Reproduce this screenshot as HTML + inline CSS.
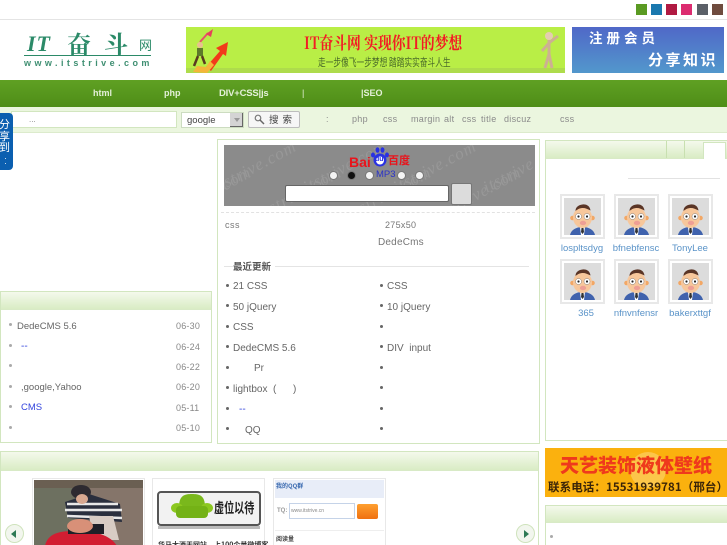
<!DOCTYPE html>
<html><head><meta charset="utf-8">
<style>
*{box-sizing:border-box}
html,body{margin:0;padding:0;overflow:hidden;width:727px;height:545px;background:#fff}
#w{width:727px;height:545px;overflow:hidden;background:#fff;position:relative;font-family:"Liberation Sans","Noto Sans CJK SC",sans-serif;font-size:10px;color:#666;filter:blur(.35px)}
.a{position:absolute}
.t{position:absolute;white-space:nowrap;line-height:12px}
.panel{position:absolute;border:1px solid #d2e6bf;background:#fff}
.hd{position:absolute;background:linear-gradient(#f4f9ec,#d9ecc4);border-bottom:1px solid #d8eac6}
.sw{position:absolute;top:4px;width:11px;height:11px}
.nav{position:absolute;top:87px;color:#e4f0d8;font-weight:bold;font-size:9px;line-height:12px;white-space:nowrap}
.sub{position:absolute;top:113px;color:#8a8a8a;font-size:9px;line-height:12px;white-space:nowrap;letter-spacing:.3px}
.dot{position:absolute;width:3px;height:3px;background:#aaa;border-radius:50%}
.dot2{position:absolute;width:3px;height:3px;background:#666;border-radius:50%}
.date{position:absolute;left:176px;color:#888;font-size:9px;line-height:12px;letter-spacing:.2px;margin-top:1px}
.l{position:absolute;font-size:10px;line-height:12px;white-space:nowrap;color:#666;margin-top:2px}
.av{position:absolute;width:45px;height:45px;border:2px solid #e8e8e8;background:#fff;padding:2px}
.av svg{display:block}
.nm{position:absolute;color:#5a93c8;font-size:9.5px;line-height:12px;white-space:nowrap;text-align:center;width:60px}
.radio{position:absolute;top:171px;width:9px;height:9px;border-radius:50%;background:#f4f4f4;border:1px solid #777}
.wm{position:absolute;white-space:nowrap;font:italic 17px/20px "Liberation Serif",serif;color:#989898;transform:rotate(-28deg);letter-spacing:1px}
</style></head><body>
<svg width="0" height="0" style="position:absolute"><defs>
<symbol id="face" viewBox="0 0 37 37">
<rect width="37" height="37" fill="#dcdcdc"/>
<path d="M6 37c1-5 6-8 12.500-8S30 32 31 37z" fill="#3f62ad"/>
<path d="M16 29h5l-1 8h-3z" fill="#fff"/><path d="M17.500 30h2l.5 4-1.500 2-1.500-2z" fill="#333"/>
<circle cx="8.500" cy="20" r="2.300" fill="#f2a765"/><circle cx="28.500" cy="20" r="2.300" fill="#f2a765"/>
<ellipse cx="18.500" cy="19.500" rx="9.500" ry="10.500" fill="#f7c79b"/>
<path d="M11.500 13c0-4 3-6 7-6.500 4.500-.5 7.500 2 8 6-3-1.500-5-2.500-7.500-2.500-3 0-5 1-7.500 3z" fill="#5a3526"/>
<circle cx="14.500" cy="18.500" r="3" fill="#fff" stroke="#666" stroke-width=".4"/><circle cx="23" cy="18.500" r="3" fill="#fff" stroke="#666" stroke-width=".4"/>
<circle cx="14.500" cy="18.500" r="1.100" fill="#222"/><circle cx="23" cy="18.500" r="1.100" fill="#222"/>
<ellipse cx="19" cy="25" rx="3.200" ry="2.200" fill="#ee9f95"/>
</symbol>
</defs></svg>
<div id="w">

<!-- swatches -->
<div class="sw" style="left:636px;background:#5a9a22"></div>
<div class="sw" style="left:651px;background:#1a78ae"></div>
<div class="sw" style="left:666px;background:#b01a42"></div>
<div class="sw" style="left:681px;background:#dc2c70"></div>
<div class="sw" style="left:697px;background:#5b6068"></div>
<div class="sw" style="left:712px;background:#6f4b3e"></div>
<div class="a" style="left:0;top:19px;width:727px;height:1px;background:#e4e4e4"></div>

<!-- logo -->
<div class="t" style="left:27px;top:33px;font:italic bold 22px/22px 'Liberation Serif',serif;color:#2b8a68;letter-spacing:1px">IT</div>
<div class="t" style="left:67px;top:28px;font:bold 24px/30px 'Noto Serif CJK SC',serif;color:#2b8a68">奋</div>
<div class="t" style="left:104px;top:28px;font:bold 24px/30px 'Noto Serif CJK SC',serif;color:#2b8a68">斗</div>
<div class="t" style="left:139px;top:36px;font:13px/18px 'Noto Sans CJK SC',sans-serif;color:#2b8a68">网</div>
<div class="a" style="left:24px;top:55px;width:127px;height:1px;background:#2b8a68"></div>
<div class="t" style="left:24px;top:57px;font:bold 9px/12px 'Liberation Sans',sans-serif;color:#3f8f72;letter-spacing:3.450px">www.itstrive.com</div>

<!-- banner -->
<div class="a" style="left:186px;top:27px;width:379px;height:46px;background:#b9ee46;overflow:hidden">
<div class="a" style="left:0;top:41px;width:379px;height:5px;background:#aedc4c"></div>
<svg class="a" style="left:0;top:0" width="50" height="46" viewBox="0 0 50 46">
<path d="M20 40 34 24 30 21 42 15 40 29 37 27 25 44z" fill="#f23a1a"/>
<path d="M7 45l4-6 9 1 4-6 4 4-7 8z" fill="#f4b63a"/>
<path d="M14 15 22 6" stroke="#e6506a" stroke-width="2"/><path d="M20 7l7-5-2 8z" fill="#e6405a"/>
<circle cx="14" cy="18" r="3" fill="#e8c090"/><rect x="11" y="21" width="6" height="8" fill="#5d7a2a"/>
<path d="M12 29 8 39M16 29l3 8" stroke="#5a3a20" stroke-width="2.500"/>
</svg>
<div class="t" style="left:118px;top:5px;font:bold 17px/20px 'Noto Serif CJK SC',serif;color:#f31c24;transform:scaleX(.81);transform-origin:0 0">IT奋斗网 实现你IT的梦想</div>
<div class="t" style="left:132px;top:28px;font:11px/14px 'Noto Sans CJK SC',sans-serif;color:#4a6a2a;transform:scaleX(.7);transform-origin:0 0">走一步像飞一步梦想 踏踏实实奋斗人生</div>
<svg class="a" style="left:350px;top:2px" width="28" height="42" viewBox="0 0 28 42"><circle cx="13" cy="7" r="4" fill="#e4cdb0"/><path d="M13 11v14M13 14 6 22M13 14 22 7M13 25 9 39M13 25 16 39" stroke="#cdb092" stroke-width="3" fill="none"/></svg>
</div>
<div class="a" style="left:572px;top:27px;width:152px;height:46px;background:linear-gradient(#5068c8,#5298cc)">
<div class="t" style="left:17px;top:1px;font:bold 13.500px/18px 'Noto Sans CJK SC',sans-serif;color:#fff;letter-spacing:4px">注册会员</div>
<div class="t" style="left:76px;top:23px;font:bold 15px/20px 'Noto Sans CJK SC',sans-serif;color:#fff;letter-spacing:2.500px">分享知识</div>
</div>

<!-- nav -->
<div class="a" style="left:0;top:80px;width:727px;height:27px;background:linear-gradient(#5fa023,#4e8d17)"></div>
<div class="nav" style="left:93px">html</div>
<div class="nav" style="left:164px">php</div>
<div class="nav" style="left:219px;font-size:9.500px;letter-spacing:-.2px;top:88px">DIV+CSS|js</div>
<div class="nav" style="left:302px;font-weight:normal">|</div>
<div class="nav" style="left:361px">|SEO</div>

<!-- subbar -->
<div class="a" style="left:0;top:107px;width:727px;height:26px;background:#ebf6df;border-bottom:1px solid #dcebcc"></div>
<div class="a" style="left:11px;top:111px;width:166px;height:17px;background:#fff;border:1px solid #d2e6bf"></div>
<div class="t" style="left:29px;top:114px;font-size:8px;color:#888">...</div>
<div class="a" style="left:181px;top:112px;width:63px;height:16px;background:#fff;border:1px solid #ccdcc0"></div>
<div class="t" style="left:187px;top:115px;font-size:9.500px;color:#444">google</div>
<div class="a" style="left:230px;top:113px;width:13px;height:14px;background:#d4d4d4;border-right:1px solid #666;border-bottom:1px solid #666"></div>
<div class="a" style="left:234px;top:118px;border:3px solid transparent;border-top:4px solid #999"></div>
<div class="a" style="left:248px;top:111px;width:52px;height:17px;background:#f6f6f6;border:1px solid #bdbdbd;border-radius:2px"></div>
<svg class="a" style="left:254px;top:114px" width="11" height="11" viewBox="0 0 11 11"><circle cx="4" cy="4" r="2.800" fill="none" stroke="#777" stroke-width="1.200"/><path d="M6 6l4 4" stroke="#666" stroke-width="1.500"/></svg>
<div class="t" style="left:269px;top:113px;font:9.500px/13px 'Noto Sans CJK SC',sans-serif;color:#444;letter-spacing:4px">搜索</div>
<div class="sub" style="left:326px">:</div>
<div class="sub" style="left:352px">php</div>
<div class="sub" style="left:383px">css</div>
<div class="sub" style="left:411px">margin</div>
<div class="sub" style="left:444px">alt</div>
<div class="sub" style="left:462px">css</div>
<div class="sub" style="left:481px">title</div>
<div class="sub" style="left:504px">discuz</div>
<div class="sub" style="left:560px">css</div>

<!-- share tab -->
<div class="a" style="left:0;top:113px;width:13px;height:57px;background:#0b5fb0;border-radius:0 4px 4px 0"></div>
<div class="a" style="left:-1px;top:119px;width:12px;color:#fff;font:11px/11.500px 'Noto Sans CJK SC',sans-serif">分<br>享<br>到</div>
<div class="a" style="left:5px;top:158px;width:1px;height:1px;background:#cde"></div>
<div class="a" style="left:5px;top:163px;width:1px;height:1px;background:#cde"></div>

<!-- left panel -->
<div class="panel" style="left:0;top:291px;width:212px;height:152px"></div>
<div class="hd" style="left:1px;top:292px;width:210px;height:18px"></div>
<div class="dot" style="left:9px;top:323px"></div><div class="l" style="left:17px;top:319px;font-size:9.500px">DedeCMS 5.6</div><div class="date" style="top:319px">06-30</div>
<div class="dot" style="left:9px;top:344px"></div><div class="l" style="left:21px;top:339px;color:#3344dd">--</div><div class="date" style="top:340px">06-24</div>
<div class="dot" style="left:9px;top:364px"></div><div class="date" style="top:360px">06-22</div>
<div class="dot" style="left:9px;top:385px"></div><div class="l" style="left:21px;top:380px;font-size:9.500px">,google,Yahoo</div><div class="date" style="top:380px">06-20</div>
<div class="dot" style="left:9px;top:405px"></div><div class="l" style="left:21px;top:400px;color:#3344dd;font-size:9.500px">CMS</div><div class="date" style="top:401px">05-11</div>
<div class="dot" style="left:9px;top:426px"></div><div class="date" style="top:421px">05-10</div>

<!-- center panel -->
<div class="panel" style="left:217px;top:139px;width:323px;height:305px"></div>
<div class="a" style="left:224px;top:145px;width:311px;height:61px;background:#8b8b8b;overflow:hidden">
<div class="wm" style="left:-15px;top:12px">itstrive.com</div>
<div class="wm" style="left:75px;top:12px">itstrive.com</div>
<div class="wm" style="left:165px;top:12px">itstrive.com</div>
<div class="wm" style="left:255px;top:12px">itstrive.com</div>
<div class="wm" style="left:-60px;top:38px">itstrive.com</div>
<div class="wm" style="left:30px;top:38px">itstrive.com</div>
<div class="wm" style="left:120px;top:38px">itstrive.com</div>
<div class="wm" style="left:210px;top:38px">itstrive.com</div>
</div>
<div class="t" style="left:349px;top:154px;font:bold 14px/16px 'Liberation Sans',sans-serif;color:#e8141c">Bai</div>
<svg class="a" style="left:369px;top:146px" width="22" height="22" viewBox="0 0 22 22"><circle cx="11" cy="14" r="6.500" fill="#2932e1"/><ellipse cx="4" cy="9" rx="2" ry="2.500" fill="#2932e1"/><ellipse cx="8.500" cy="4" rx="2" ry="2.800" fill="#2932e1"/><ellipse cx="13.500" cy="4" rx="2" ry="2.800" fill="#2932e1"/><ellipse cx="18" cy="9" rx="2" ry="2.500" fill="#2932e1"/><circle cx="11" cy="14.500" r="4" fill="#fff"/></svg>
<div class="t" style="left:375px;top:155px;font:bold 7px/10px 'Liberation Sans',sans-serif;color:#2932e1">du</div>
<div class="t" style="left:388px;top:153px;font:bold 11px/15px 'Noto Sans CJK SC',sans-serif;color:#e8141c">百度</div>
<div class="radio" style="left:329px"></div>
<div class="radio" style="left:347px;background:#111"></div>
<div class="radio" style="left:365px"></div>
<div class="t" style="left:376px;top:169px;font-size:9.500px;color:#2932c8">MP3</div>
<div class="radio" style="left:397px"></div>
<div class="radio" style="left:415px"></div>
<div class="a" style="left:285px;top:185px;width:164px;height:17px;background:#fff;border:1px solid #666;border-radius:2px"></div>
<div class="a" style="left:451px;top:183px;width:21px;height:22px;background:#dcdcdc;border:1px solid #777;border-radius:2px"></div>
<div class="a" style="left:221px;top:212px;width:314px;border-top:1px dashed #e2e2e2"></div>
<div class="t" style="left:225px;top:219px;font-size:9px;letter-spacing:.5px;color:#777">css</div>
<div class="t" style="left:385px;top:219px;font-size:9px;letter-spacing:.3px;color:#777">275x50</div>
<div class="t" style="left:378px;top:237px;font-size:10px;letter-spacing:.2px;color:#777">DedeCms</div>
<div class="a" style="left:224px;top:266px;width:9px;height:1px;background:#e4e4e4"></div>
<div class="t" style="left:233px;top:260px;font:bold 9.500px/13px 'Noto Sans CJK SC',sans-serif;color:#555">最近更新</div>
<div class="a" style="left:275px;top:266px;width:254px;height:1px;background:#e4e4e4"></div>

<div class="dot2" style="left:226px;top:284px"></div><div class="l" style="left:233px;top:279px">21 CSS</div>
<div class="dot2" style="left:226px;top:304px"></div><div class="l" style="left:233px;top:300px">50 jQuery</div>
<div class="dot2" style="left:226px;top:325px"></div><div class="l" style="left:233px;top:320px">CSS</div>
<div class="dot2" style="left:226px;top:345px"></div><div class="l" style="left:233px;top:341px">DedeCMS 5.6</div>
<div class="dot2" style="left:226px;top:366px"></div><div class="l" style="left:254px;top:361px">Pr</div>
<div class="dot2" style="left:226px;top:386px"></div><div class="l" style="left:233px;top:382px">lightbox &nbsp;(&nbsp; &nbsp; &nbsp; )</div>
<div class="dot2" style="left:226px;top:407px"></div><div class="l" style="left:239px;top:402px;color:#3344dd">--</div>
<div class="dot2" style="left:226px;top:427px"></div><div class="l" style="left:245px;top:423px">QQ</div>

<div class="dot2" style="left:380px;top:284px"></div><div class="l" style="left:387px;top:279px">CSS</div>
<div class="dot2" style="left:380px;top:304px"></div><div class="l" style="left:387px;top:300px">10 jQuery</div>
<div class="dot2" style="left:380px;top:325px"></div>
<div class="dot2" style="left:380px;top:345px"></div><div class="l" style="left:387px;top:341px">DIV &nbsp;input</div>
<div class="dot2" style="left:380px;top:366px"></div>
<div class="dot2" style="left:380px;top:386px"></div>
<div class="dot2" style="left:380px;top:407px"></div>
<div class="dot2" style="left:380px;top:427px"></div>

<!-- right panel -->
<div class="panel" style="left:545px;top:140px;width:183px;height:301px"></div>
<div class="hd" style="left:546px;top:141px;width:181px;height:18px"></div>
<div class="a" style="left:666px;top:141px;width:1px;height:17px;background:#c8e0b0"></div>
<div class="a" style="left:684px;top:141px;width:1px;height:17px;background:#c8e0b0"></div>
<div class="a" style="left:703px;top:142px;width:23px;height:17px;background:#fff;border:1px solid #d2e6bf;border-bottom:0"></div>
<div class="a" style="left:628px;top:178px;width:92px;height:1px;background:#e2e2e2"></div>
<div class="av" style="left:560px;top:194px"><svg width="37" height="37"><use href="#face"/></svg></div>
<div class="av" style="left:614px;top:194px"><svg width="37" height="37"><use href="#face"/></svg></div>
<div class="av" style="left:668px;top:194px"><svg width="37" height="37"><use href="#face"/></svg></div>
<div class="av" style="left:560px;top:259px"><svg width="37" height="37"><use href="#face"/></svg></div>
<div class="av" style="left:614px;top:259px"><svg width="37" height="37"><use href="#face"/></svg></div>
<div class="av" style="left:668px;top:259px"><svg width="37" height="37"><use href="#face"/></svg></div>
<div class="nm" style="left:552px;top:243px">lospltsdyg</div>
<div class="nm" style="left:606px;top:243px">bfnebfensc</div>
<div class="nm" style="left:660px;top:243px">TonyLee</div>
<div class="nm" style="left:556px;top:308px">365</div>
<div class="nm" style="left:606px;top:308px">nfnvnfensr</div>
<div class="nm" style="left:660px;top:308px">bakerxttgf</div>

<!-- bottom panel -->
<div class="panel" style="left:0;top:451px;width:539px;height:100px"></div>
<div class="hd" style="left:1px;top:452px;width:537px;height:19px"></div>
<div class="a" style="left:5px;top:524px;width:19px;height:19px;border-radius:50%;background:#f2f6ee;border:1px solid #cfe3bc"></div>
<div class="a" style="left:11px;top:530px;border:4px solid transparent;border-right:5px solid #2e7a55;border-left:0"></div>
<div class="a" style="left:516px;top:524px;width:19px;height:19px;border-radius:50%;background:#f2f6ee;border:1px solid #cfe3bc"></div>
<div class="a" style="left:524px;top:530px;border:4px solid transparent;border-left:5px solid #2e7a55;border-right:0"></div>

<div class="a" style="left:32px;top:478px;width:113px;height:70px;border:1px solid #e8e8e8;padding:1px;background:#fff">
<svg width="109" height="66" viewBox="0 0 109 66" style="display:block"><rect width="109" height="66" fill="#85756a"/><rect width="45" height="66" fill="#6d7060"/><rect width="109" height="8" fill="#6a5f52"/>
<path d="M31 22 55 14 86 24 88 42 34 38z" fill="#2a2f3e"/><path d="M33 24 84 24M31 30 88 30M33 36 88 38" stroke="#e8e8e8" stroke-width="2.500"/>
<path d="M55 36h24l6 24H60z" fill="#d8ccc4"/>
<ellipse cx="47" cy="12" rx="10" ry="7" fill="#2d2a30"/><ellipse cx="48" cy="19" rx="6" ry="5" fill="#d8a890"/>
<path d="M11 66c2-10 10-15 28-15s36 2 44 15z" fill="#d21e32"/><rect x="34" y="44" width="36" height="10" fill="#1e2028"/><ellipse cx="46" cy="46" rx="13" ry="7" fill="#d89078"/>
</svg></div>
<div class="a" style="left:152px;top:478px;width:113px;height:70px;border:1px solid #e8e8e8;background:#fff"></div>
<div class="a" style="left:157px;top:491px;width:104px;height:35px;background:#f2f2f2;border:2px solid #555;border-radius:4px"></div>
<div class="a" style="left:158px;top:526px;width:102px;height:3px;background:#bbb"></div>
<svg class="a" style="left:170px;top:493px" width="44" height="28" viewBox="0 0 44 28"><path d="M9 14c0-12 6-13 13-13s13 1 13 13z" fill="#7ab81c"/><ellipse cx="7" cy="15" rx="6" ry="5" fill="#8cc820"/><ellipse cx="37" cy="15" rx="6" ry="5" fill="#8cc820"/><rect x="6" y="13" width="32" height="12" rx="4" fill="#74b216"/></svg>
<div class="t" style="left:214px;top:498px;font:bold 14px/20px 'Noto Sans CJK SC',sans-serif;color:#222;transform:scaleX(.72);transform-origin:0 0">虚位以待</div>
<div class="t" style="left:158px;top:539px;font:bold 7px/12px 'Noto Sans CJK SC',sans-serif;color:#333">华马大酒天网站，上100个量微博客</div>
<div class="a" style="left:273px;top:478px;width:113px;height:70px;border:1px solid #e8e8e8;background:#fff"></div>
<div class="a" style="left:275px;top:480px;width:109px;height:18px;background:#e8edf8"></div>
<div class="t" style="left:276px;top:481px;font:bold 6px/10px 'Noto Sans CJK SC',sans-serif;color:#3a6ab0">我的QQ群</div>
<div class="t" style="left:277px;top:506px;font:bold 6px/10px 'Liberation Sans',sans-serif;color:#999">TQ:</div>
<div class="a" style="left:289px;top:503px;width:66px;height:16px;border:1px solid #c5d3e8;background:#fff"></div>
<div class="t" style="left:291px;top:506px;font-size:5px;line-height:10px;color:#888">www.itstrive.cn</div>
<div class="a" style="left:357px;top:504px;width:21px;height:15px;background:linear-gradient(#ffa030,#f07010);border-radius:2px"></div>
<div class="a" style="left:275px;top:530px;width:109px;height:1px;background:#eee"></div>
<div class="t" style="left:276px;top:534px;font:bold 6px/10px 'Noto Sans CJK SC',sans-serif;color:#444">阅读量</div>

<!-- ad -->
<div class="a" style="left:545px;top:448px;width:182px;height:49px;background:#fbb10e">
<div class="a" style="left:85px;top:4px;width:36px;height:36px;border-radius:50%;background:#fcc64a"></div>
<div class="t" style="left:15px;top:4px;font:900 19px/25px 'Noto Sans CJK SC',sans-serif;color:#ef3a1c">天艺装饰液体壁纸</div>
<div class="t" style="left:3px;top:31px;font:bold 11.500px/16px 'Noto Sans CJK SC',sans-serif;color:#3a2408;letter-spacing:.1px">联系电话：15531939781（邢台）</div>
</div>

<!-- bottom right -->
<div class="panel" style="left:545px;top:505px;width:183px;height:46px"></div>
<div class="hd" style="left:546px;top:506px;width:181px;height:17px"></div>
<div class="dot" style="left:550px;top:535px"></div>
</div>
</body></html>
